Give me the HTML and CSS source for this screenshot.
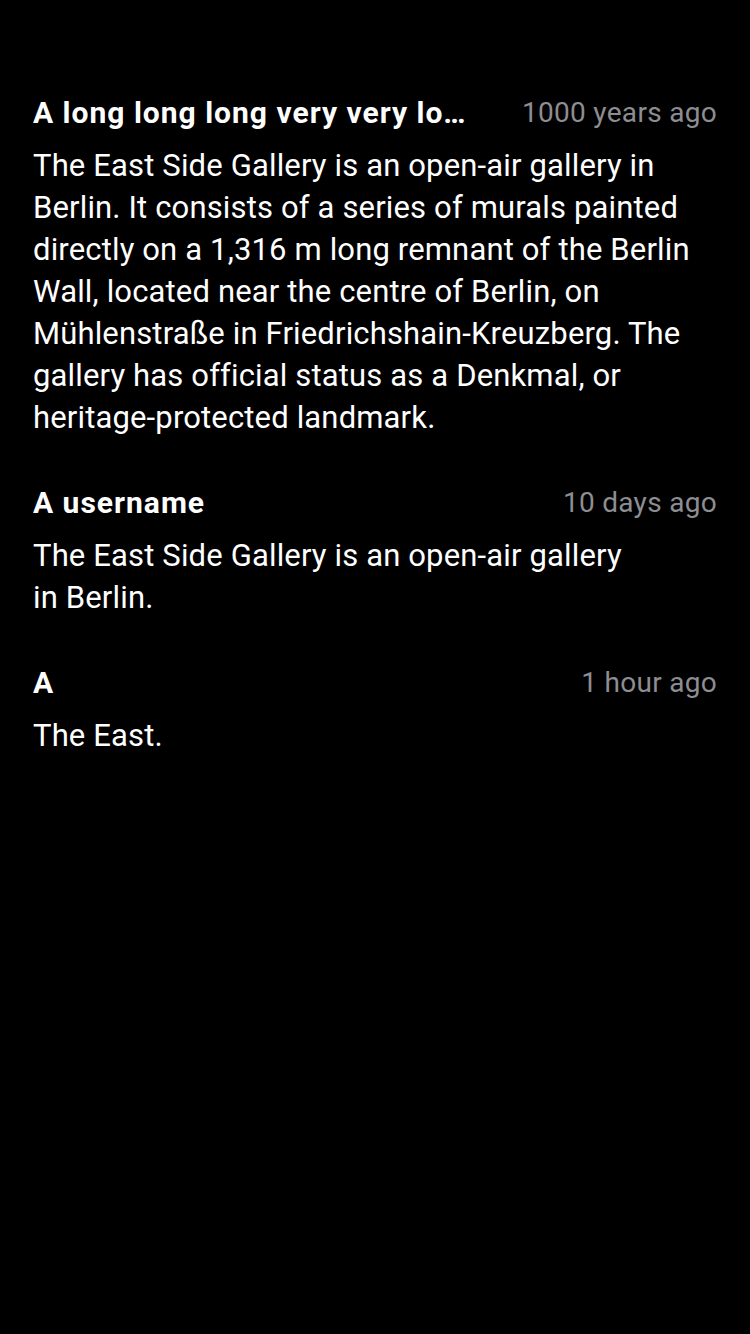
FILE: index.html
```html
<!DOCTYPE html>
<html>
<head>
<meta charset="utf-8">
<link rel="stylesheet" href="styles.css">
</head>
<body>
<div class="list">
  <div class="item">
    <div class="head">
      <div class="name">A long long long very very long username that goes on</div>
      <div class="time">1000 years ago</div>
    </div>
    <div class="body">The East Side Gallery is an open-air gallery in Berlin. It consists of a series of murals painted directly on a 1,316 m long remnant of the Berlin Wall, located near the centre of Berlin, on Mühlenstraße in Friedrichshain-Kreuzberg. The gallery has official status as a Denkmal, or heritage-protected landmark.</div>
  </div>
  <div class="item">
    <div class="head">
      <div class="name">A username</div>
      <div class="time">10 days ago</div>
    </div>
    <div class="body narrow">The East Side Gallery is an open-air gallery in Berlin.</div>
  </div>
  <div class="item">
    <div class="head">
      <div class="name">A</div>
      <div class="time">1 hour ago</div>
    </div>
    <div class="body">The East.</div>
  </div>
</div>
</body>
</html>
```
FILE: styles.css
```css
html, body {
  margin: 0;
  padding: 0;
  background: #000;
}
body {
  width: 750px;
  height: 1334px;
  font-family: Roboto, "Noto Sans", sans-serif;
  color: #fff;
}
.list {
  padding: 91px 33px 0 33px;
  display: flex;
  flex-direction: column;
  gap: 42px;
}
.item {
  display: flex;
  flex-direction: column;
  gap: 12px;
}
.head {
  display: flex;
  align-items: center;
  height: 42px;
}
.name {
  flex: 1;
  min-width: 0;
  font-size: 30px;
  font-weight: 700;
  letter-spacing: 1px;
  white-space: nowrap;
  overflow: hidden;
  text-overflow: ellipsis;
}
.time {
  margin-left: 40px;
  font-size: 28px;
  letter-spacing: 0.3px;
  color: #8d8d92;
  white-space: nowrap;
}
.body {
  font-size: 31px;
  letter-spacing: 0.15px;
  line-height: 42px;
}
.narrow {
  max-width: 600px;
}
```
